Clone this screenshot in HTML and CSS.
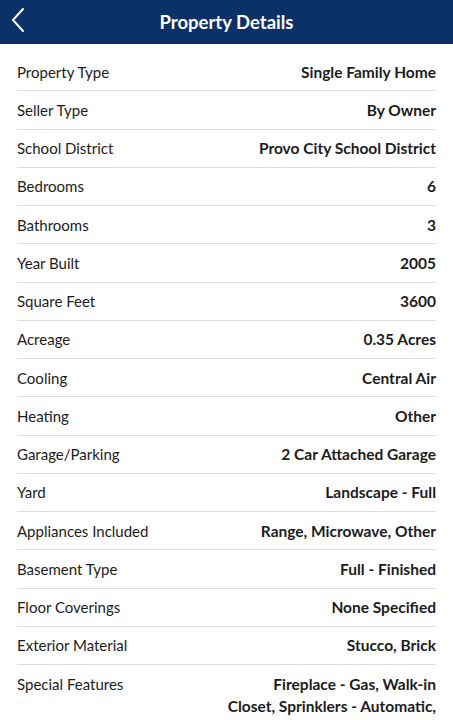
FILE: index.html
```html
<!DOCTYPE html>
<html lang="en">
<head>
    <meta charset="UTF-8">
    <meta name="viewport" content="width=device-width, initial-scale=1.0">
    <title>Property Details</title>
    <link rel="stylesheet" href="styles.css">
</head>
<body>
    <div class="header">
        <button class="back-btn" aria-label="Back">
            <svg width="14" height="26" viewBox="0 0 14 26">
                <path d="M12 2 L2 13 L12 24" fill="none" stroke="#fff" stroke-width="2" stroke-linecap="round" stroke-linejoin="round"/>
            </svg>
        </button>
        <h1>Property Details</h1>
    </div>

    <div class="details">
        <div class="row"><span class="label">Property Type</span><span class="value">Single Family Home</span></div>
        <div class="row"><span class="label">Seller Type</span><span class="value">By Owner</span></div>
        <div class="row"><span class="label">School District</span><span class="value">Provo City School District</span></div>
        <div class="row"><span class="label">Bedrooms</span><span class="value">6</span></div>
        <div class="row"><span class="label">Bathrooms</span><span class="value">3</span></div>
        <div class="row"><span class="label">Year Built</span><span class="value">2005</span></div>
        <div class="row"><span class="label">Square Feet</span><span class="value">3600</span></div>
        <div class="row"><span class="label">Acreage</span><span class="value">0.35 Acres</span></div>
        <div class="row"><span class="label">Cooling</span><span class="value">Central Air</span></div>
        <div class="row"><span class="label">Heating</span><span class="value">Other</span></div>
        <div class="row"><span class="label">Garage/Parking</span><span class="value">2 Car Attached Garage</span></div>
        <div class="row"><span class="label">Yard</span><span class="value">Landscape - Full</span></div>
        <div class="row"><span class="label">Appliances Included</span><span class="value">Range, Microwave, Other</span></div>
        <div class="row"><span class="label">Basement Type</span><span class="value">Full - Finished</span></div>
        <div class="row"><span class="label">Floor Coverings</span><span class="value">None Specified</span></div>
        <div class="row"><span class="label">Exterior Material</span><span class="value">Stucco, Brick</span></div>
        <div class="row multi"><span class="label">Special Features</span><span class="value">Fireplace - Gas, Walk-in<br>Closet, Sprinklers - Automatic, Deck</span></div>
    </div>
</body>
</html>
```

FILE: styles.css
```css
body {
    margin: 0;
    font-family: Lato, "Open Sans", sans-serif;
    color: #1c1c1c;
    background-color: #fff;
}
.header {
    height: 44px;
    background-color: #0b3168;
    display: flex;
    align-items: center;
    justify-content: center;
    position: relative;
}
.header h1 {
    margin: 0;
    color: #fff;
    font-size: 18.5px;
    font-weight: 700;
}
.back-btn {
    position: absolute;
    left: 11px;
    top: 7px;
    background: none;
    border: none;
    padding: 0;
    cursor: pointer;
}
.details {
    padding: 9px 17px 0;
}
.row {
    height: 37.25px;
    display: flex;
    justify-content: space-between;
    align-items: center;
    border-bottom: 1px solid #dcdcdc;
    font-size: 15px;
}
.label {
    font-weight: 400;
}
.value {
    font-weight: 700;
    font-size: 15.5px;
    text-align: right;
}
.row.multi {
    height: auto;
    align-items: flex-start;
    padding-top: 8px;
    border-bottom: none;
}
.row.multi .value {
    max-width: 220px;
    line-height: 22px;
}
.row.multi .label {
    line-height: 22px;
}
```
